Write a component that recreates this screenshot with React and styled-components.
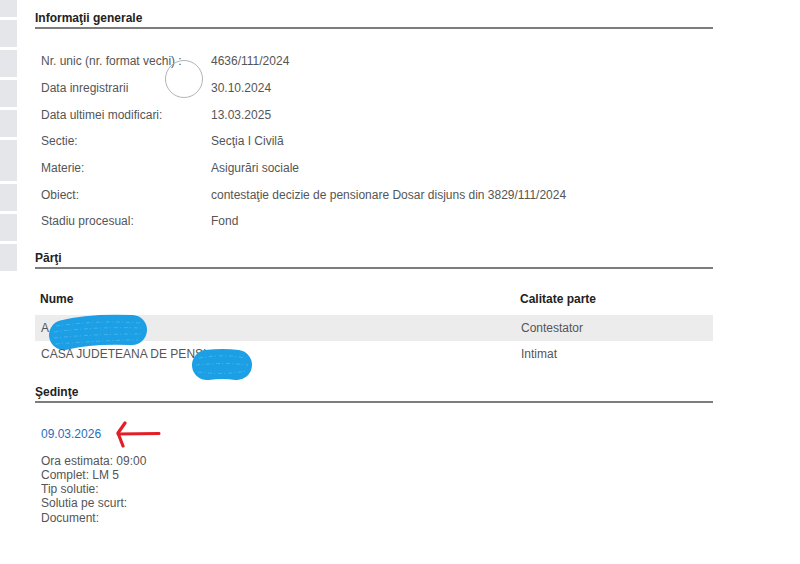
import React from "react";
import styled, { createGlobalStyle } from "styled-components";

const Global = createGlobalStyle`
  html, body { margin: 0; padding: 0; background: #fff; }
  body { font-family: "Liberation Sans", Arial, sans-serif; }
`;

const Page = styled.div`
  position: relative;
  display: flex;
  align-items: flex-start;
  width: 800px;
  height: 564px;
  overflow: hidden;
  background: #fff;
`;

const Sidebar = styled.div`
  display: flex;
  flex-direction: column;
  gap: 3px;
  width: 17px;
  flex: none;
`;

const SideBlock = styled.div`
  height: ${(p) => p.$h}px;
  background: #e4e6e9;
`;

const Main = styled.main`
  margin-left: 18px;
  width: 678px;
  display: flex;
  flex-direction: column;
`;

const SectionTitle = styled.h2`
  margin: ${(p) => p.$mt || 0}px 0 0;
  padding: 11px 0 2px;
  font-size: 12px;
  line-height: 14px;
  font-weight: bold;
  color: #222;
  border-bottom: 2px solid #7d7d7d;
`;

const InfoGrid = styled.dl`
  margin: 19px 0 0;
  padding-left: 6px;
  display: grid;
  grid-template-columns: 170px 1fr;
  grid-auto-rows: 26.67px;
  align-items: center;
  font-size: 12px;
  color: #555;
`;

const Label = styled.dt`
  margin: 0;
`;

const Value = styled.dd`
  margin: 0;
`;

const Table = styled.div`
  margin-top: 20px;
  display: flex;
  flex-direction: column;
`;

const Row = styled.div`
  display: grid;
  grid-template-columns: 480px 1fr;
  height: 26px;
  align-items: ${(p) => (p.$head ? "start" : "center")};
  background: ${(p) => (p.$shade ? "#ececec" : "transparent")};
`;

const HeadCell = styled.div`
  padding: 3px 5px 0;
  font-size: 12px;
  line-height: 14px;
  font-weight: bold;
  color: #222;
`;

const Cell = styled.div`
  position: relative;
  padding-left: 6px;
  font-size: 12px;
  line-height: 14px;
  color: #555;
`;

const Scribble = styled.svg`
  position: absolute;
  left: ${(p) => p.$x}px;
  top: ${(p) => p.$y}px;
  overflow: visible;
`;

const LinkRow = styled.div`
  margin-top: 24px;
  padding-left: 6px;
  display: flex;
  align-items: center;
  height: 14px;
`;

const DateLink = styled.a`
  font-size: 12px;
  line-height: 14px;
  color: #1f6fbf;
  text-decoration: none;
`;

const Arrow = styled.svg`
  margin-left: 14px;
  flex: none;
`;

const Details = styled.div`
  margin-top: 13px;
  padding-left: 6px;
  font-size: 12px;
  line-height: 14.25px;
  color: #555;
`;

const CursorRing = styled.div`
  position: absolute;
  left: 165px;
  top: 60px;
  width: 36px;
  height: 36px;
  border: 1px solid #b3b3b3;
  border-radius: 50%;
`;

const blocks = [17, 27, 27, 27, 27, 41, 27, 27, 27];

const info = [
  ["Nr. unic (nr. format vechi) :", "4636/111/2024"],
  ["Data inregistrarii", "30.10.2024"],
  ["Data ultimei modificari:", "13.03.2025"],
  ["Sectie:", "Secţia I Civilă"],
  ["Materie:", "Asigurări sociale"],
  ["Obiect:", "contestaţie decizie de pensionare Dosar disjuns din 3829/111/2024"],
  ["Stadiu procesual:", "Fond"],
];

const details = [
  "Ora estimata: 09:00",
  "Complet: LM 5",
  "Tip solutie:",
  "Solutia pe scurt:",
  "Document:",
];

function BlueMark({ w, h, x, y, core, fat, streaks }) {
  return (
    <Scribble $x={x} $y={y} width={w} height={h} viewBox={`0 0 ${w} ${h}`}>
      <path
        d={core}
        fill="none"
        stroke="#1c9fe4"
        strokeWidth={fat}
        strokeLinecap="round"
        strokeLinejoin="round"
      />
      {streaks.map((d, i) => (
        <path
          key={i}
          d={d}
          fill="none"
          stroke="#5cc2f2"
          strokeWidth="1"
          strokeDasharray="4 2 1 3"
          opacity="0.6"
        />
      ))}
    </Scribble>
  );
}

export default function App() {
  return (
    <>
      <Global />
      <Page>
        <Sidebar>
          {blocks.map((h, i) => (
            <SideBlock key={i} $h={h} />
          ))}
        </Sidebar>
        <Main>
          <SectionTitle>Informaţii generale</SectionTitle>
          <InfoGrid>
            {info.map(([l, v]) => (
              <React.Fragment key={l}>
                <Label>{l}</Label>
                <Value>{v}</Value>
              </React.Fragment>
            ))}
          </InfoGrid>

          <SectionTitle $mt={5}>Părţi</SectionTitle>
          <Table>
            <Row $head>
              <HeadCell>Nume</HeadCell>
              <HeadCell>Calitate parte</HeadCell>
            </Row>
            <Row $shade>
              <Cell>
                A
                <BlueMark
                  x={13}
                  y={-7}
                  w={100}
                  h={38}
                  fat={30}
                  core="M16 21 C35 16 60 15 84 16"
                  streaks={[
                    "M8 12 C35 8 65 7 92 9",
                    "M6 18 C35 14 65 13 94 14",
                    "M6 24 C35 21 65 20 94 20",
                    "M8 30 C35 28 65 26 90 26",
                  ]}
                />
              </Cell>
              <Cell>Contestator</Cell>
            </Row>
            <Row>
              <Cell>
                CASA JUDETEANA DE PENSI
                <BlueMark
                  x={156}
                  y={1}
                  w={62}
                  h={35}
                  fat={30}
                  core="M16 17 C25 16 38 16 46 17"
                  streaks={[
                    "M8 10 C25 7 40 7 54 10",
                    "M5 17 C25 15 40 15 57 17",
                    "M7 24 C25 26 40 26 55 23",
                  ]}
                />
              </Cell>
              <Cell>Intimat</Cell>
            </Row>
          </Table>

          <SectionTitle $mt={7}>Şedinţe</SectionTitle>
          <LinkRow>
            <DateLink href="#">09.03.2026</DateLink>
            <Arrow width="46" height="28" viewBox="0 0 46 28">
              <path
                d="M3 14 L44 13.5"
                fill="none"
                stroke="#e21f26"
                strokeWidth="3"
                strokeLinecap="round"
              />
              <path
                d="M10 3 L3 13 L8 26"
                fill="none"
                stroke="#e21f26"
                strokeWidth="3.2"
                strokeLinecap="round"
                strokeLinejoin="round"
              />
            </Arrow>
          </LinkRow>
          <Details>
            {details.map((d) => (
              <div key={d}>{d}</div>
            ))}
          </Details>
        </Main>
        <CursorRing />
      </Page>
    </>
  );
}
